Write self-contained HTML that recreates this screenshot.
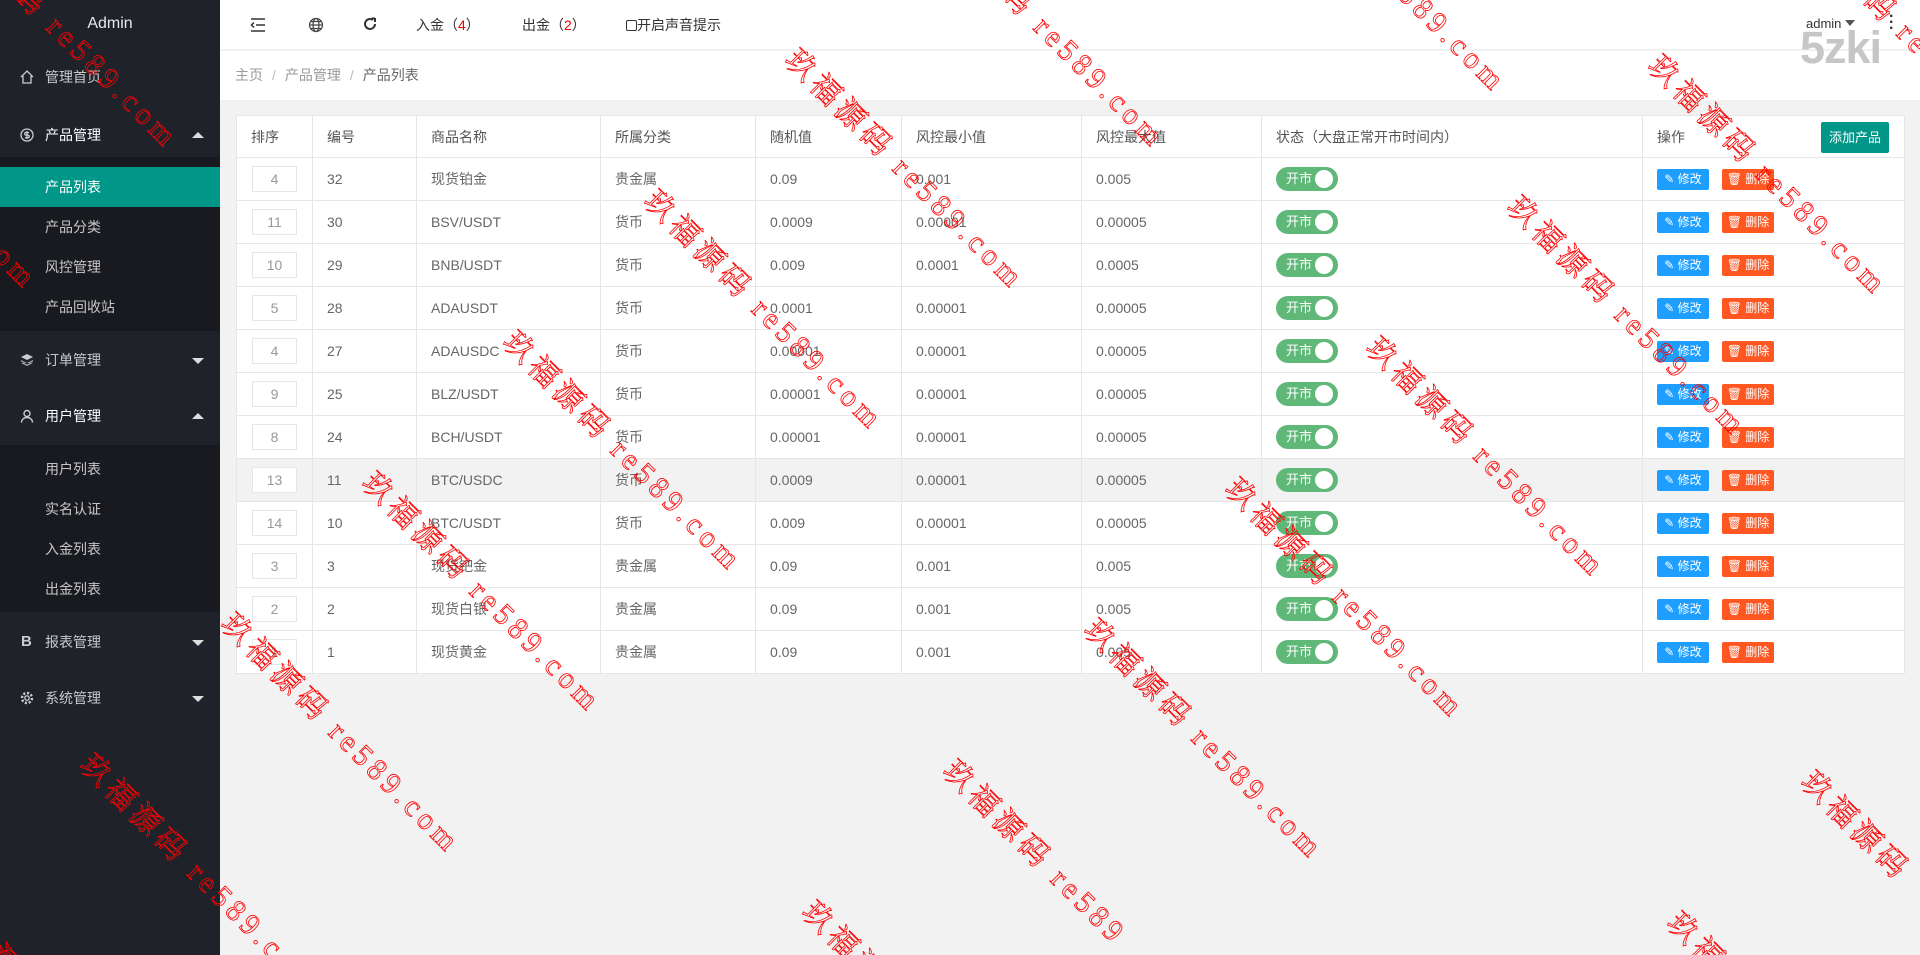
<!DOCTYPE html>
<html style="overflow:hidden;width:1920px;height:955px"><head><meta charset="utf-8"><style>
*{margin:0;padding:0;box-sizing:border-box}
body{width:1920px;height:955px;overflow:hidden;background:#f2f2f2;font-family:"Liberation Sans","Noto Sans CJK SC",sans-serif;font-size:14px;color:#666;position:relative}
#wrap{position:absolute;left:0;top:0;width:1920px;height:955px;overflow:hidden;contain:paint;clip-path:inset(0)}
.side{position:absolute;left:0;top:0;width:220px;height:955px;background:#20222a;color:rgba(255,255,255,.75)}
.logo{height:50px;line-height:48px;text-align:center;color:#e8e8e8;font-size:16px}
.it{position:absolute;left:0;width:220px;height:40px;line-height:40px;padding-left:45px}
.it svg{position:absolute;left:20px;top:13px}
.arr{position:absolute;right:16px;top:17px;width:0;height:0;border-left:6px solid transparent;border-right:6px solid transparent}
.up{border-bottom:6px solid #ddd}.dn{border-top:6px solid #ddd;top:18px}
.sub{position:absolute;left:0;width:220px;background:#191a1f}
.si{position:absolute;left:0;width:220px;height:40px;line-height:40px;padding-left:45px}
.act{background:#009688;color:#fff}
.top{position:absolute;left:220px;top:0;right:0;height:50px;background:#fff;border-bottom:1px solid #f0f0f0}
.bc{position:absolute;left:220px;top:51px;right:0;height:49px;background:#fff;line-height:49px;padding-left:15px;color:#999}
.bc b{font-weight:normal;margin:0 9px;color:#bbb}
table{position:absolute;left:236px;top:115px;width:1668px;border-collapse:collapse;table-layout:fixed;background:#fff}
td,th{border:1px solid #e6e6e6;height:43px;padding:0 14px;text-align:left;font-weight:normal;color:#666;white-space:nowrap}
th{height:42px;font-weight:normal;color:#555}
tr.h td{background:#f2f2f2}
.inp{display:inline-block;width:45px;height:26px;border:1px solid #e6e6e6;color:#999;text-align:center;line-height:24px;margin-left:1px}
.sw{display:inline-block;position:relative;width:62px;height:24px;border-radius:12px;background:#5fb878;color:#fff;font-size:13px;line-height:24px;padding-left:10px}
.sw:after{content:"";position:absolute;right:5px;top:3px;width:18px;height:18px;border-radius:50%;background:#fff}
.bt{display:inline-block;height:21px;line-height:21px;width:52px;border-radius:2px;color:#fff;font-size:12px;text-align:center;vertical-align:middle}
.b1{background:#1e9fff}.b2{background:#ff5722;margin-left:13px}
.add{position:absolute;right:15px;top:6px;width:68px;height:31px;line-height:31px;background:#009688;color:#fff;text-align:center;font-size:13px;border-radius:2px}
.wm{position:absolute;transform:rotate(45deg);transform-origin:0 0;font-family:"Liberation Serif","Noto Serif CJK SC",serif;font-size:30px;letter-spacing:5px;color:transparent;-webkit-text-stroke:0.8px #f00;white-space:nowrap;pointer-events:none}
</style></head><body><div id="wrap">
<div class="side">
<div class="logo">Admin</div>
<div class="it" style="top:57px"><svg width="14" height="14" viewBox="0 0 14 14" fill="none" stroke="#ccc" stroke-width="1.3"><path d="M1 7L7 1l6 6M3 6v7h8V6"/></svg>管理首页</div>
<div class="it" style="top:115px;color:#fff"><svg width="14" height="14" viewBox="0 0 14 14" fill="none" stroke="#ccc" stroke-width="1.3"><circle cx="7" cy="7" r="6"/><path d="M9 4.5H6a1.3 1.3 0 000 2.6h2a1.3 1.3 0 010 2.6H5M7 3v8"/></svg>产品管理<i class="arr up"></i></div>
<div class="sub" style="top:157px;height:174px">
<div class="si act" style="top:10px">产品列表</div>
<div class="si" style="top:50px">产品分类</div>
<div class="si" style="top:90px">风控管理</div>
<div class="si" style="top:130px">产品回收站</div>
</div>
<div class="it" style="top:340px"><svg width="14" height="14" viewBox="0 0 14 14" fill="#ccc"><path d="M7 1l6 3-6 3-6-3z"/><path d="M1 7l6 3 6-3v1.5l-6 3-6-3zM1 10l6 3 6-3" opacity=".8"/></svg>订单管理<i class="arr dn"></i></div>
<div class="it" style="top:396px;color:#fff"><svg width="14" height="14" viewBox="0 0 14 14" fill="none" stroke="#ccc" stroke-width="1.4"><circle cx="7" cy="4.5" r="3"/><path d="M1.5 13.5c0-3 2.5-5 5.5-5s5.5 2 5.5 5"/></svg>用户管理<i class="arr up"></i></div>
<div class="sub" style="top:445px;height:167px">
<div class="si" style="top:4px">用户列表</div>
<div class="si" style="top:44px">实名认证</div>
<div class="si" style="top:84px">入金列表</div>
<div class="si" style="top:124px">出金列表</div>
</div>
<div class="it" style="top:622px"><span style="position:absolute;left:21px;font-weight:bold;color:#ccc;font-size:15px">B</span>报表管理<i class="arr dn"></i></div>
<div class="it" style="top:678px"><svg width="14" height="14" viewBox="0 0 14 14" fill="none" stroke="#ccc" stroke-width="1.3"><circle cx="7" cy="7" r="2.2"/><circle cx="7" cy="7" r="5" stroke-dasharray="2.2 1.7" stroke-width="2.4"/></svg>系统管理<i class="arr dn"></i></div>
</div>
<div class="top">
<svg style="position:absolute;left:30px;top:18px" width="16" height="14" viewBox="0 0 16 14" stroke="#333" stroke-width="1.5"><path d="M1 1h14M6 7h9M1 13h14M4 4.5L1.5 7 4 9.5" fill="none"/></svg>
<svg style="position:absolute;left:88px;top:17px" width="16" height="16" viewBox="0 0 16 16" fill="none" stroke="#444" stroke-width="1.2"><circle cx="8" cy="8" r="6.5"/><ellipse cx="8" cy="8" rx="3" ry="6.5"/><path d="M1.5 8h13M2.5 4.5h11M2.5 11.5h11"/></svg>
<svg style="position:absolute;left:142px;top:16px" width="16" height="16" viewBox="0 0 16 16" fill="none" stroke="#333" stroke-width="2"><path d="M13 8a5 5 0 11-2-4"/><path d="M9.5 2.5h3.5v-.5V6" /></svg>
<span style="position:absolute;left:196px;top:15px;color:#333">入金（<span style="color:#e00">4</span>）</span>
<span style="position:absolute;left:302px;top:15px;color:#333">出金（<span style="color:#e00">2</span>）</span>
<span style="position:absolute;left:406px;top:15px;color:#333"><span style="display:inline-block;width:11px;height:11px;border:1px solid #333;border-radius:2px;vertical-align:-1px"></span>开启声音提示</span>
<span style="position:absolute;left:1586px;top:16px;color:#333;font-size:13px">admin <span style="display:inline-block;border-left:5px solid transparent;border-right:5px solid transparent;border-top:6px solid #555;vertical-align:2px"></span></span>
<span style="position:absolute;left:1669px;top:14px;color:#333;font-size:16px;line-height:6px;font-weight:bold">·<br>·<br>·</span>
</div>
<div class="bc">主页<b>/</b>产品管理<b>/</b><span style="color:#666">产品列表</span></div>
<span style="position:absolute;left:1800px;top:22px;color:#c6c6c6;font-size:45px;font-weight:bold;letter-spacing:-1px;z-index:5">5zki</span>
<table>
<colgroup><col style="width:76px"><col style="width:104px"><col style="width:184px"><col style="width:155px"><col style="width:146px"><col style="width:180px"><col style="width:180px"><col style="width:381px"><col style="width:262px"></colgroup>
<tr><th>排序</th><th>编号</th><th>商品名称</th><th>所属分类</th><th>随机值</th><th>风控最小值</th><th>风控最大值</th><th>状态（大盘正常开市时间内）</th><th style="position:relative">操作<span class="add">添加产品</span></th></tr>
<tr><td><span class="inp">4</span></td><td>32</td><td>现货铂金</td><td>贵金属</td><td>0.09</td><td>0.001</td><td>0.005</td><td><span class="sw">开市</span></td><td><span class="bt b1">✎ 修改</span><span class="bt b2">🗑 删除</span></td></tr>
<tr><td><span class="inp">11</span></td><td>30</td><td>BSV/USDT</td><td>货币</td><td>0.0009</td><td>0.00001</td><td>0.00005</td><td><span class="sw">开市</span></td><td><span class="bt b1">✎ 修改</span><span class="bt b2">🗑 删除</span></td></tr>
<tr><td><span class="inp">10</span></td><td>29</td><td>BNB/USDT</td><td>货币</td><td>0.009</td><td>0.0001</td><td>0.0005</td><td><span class="sw">开市</span></td><td><span class="bt b1">✎ 修改</span><span class="bt b2">🗑 删除</span></td></tr>
<tr><td><span class="inp">5</span></td><td>28</td><td>ADAUSDT</td><td>货币</td><td>0.0001</td><td>0.00001</td><td>0.00005</td><td><span class="sw">开市</span></td><td><span class="bt b1">✎ 修改</span><span class="bt b2">🗑 删除</span></td></tr>
<tr><td><span class="inp">4</span></td><td>27</td><td>ADAUSDC</td><td>货币</td><td>0.00001</td><td>0.00001</td><td>0.00005</td><td><span class="sw">开市</span></td><td><span class="bt b1">✎ 修改</span><span class="bt b2">🗑 删除</span></td></tr>
<tr><td><span class="inp">9</span></td><td>25</td><td>BLZ/USDT</td><td>货币</td><td>0.00001</td><td>0.00001</td><td>0.00005</td><td><span class="sw">开市</span></td><td><span class="bt b1">✎ 修改</span><span class="bt b2">🗑 删除</span></td></tr>
<tr><td><span class="inp">8</span></td><td>24</td><td>BCH/USDT</td><td>货币</td><td>0.00001</td><td>0.00001</td><td>0.00005</td><td><span class="sw">开市</span></td><td><span class="bt b1">✎ 修改</span><span class="bt b2">🗑 删除</span></td></tr>
<tr class="h"><td><span class="inp" style="background:#fff">13</span></td><td>11</td><td>BTC/USDC</td><td>货币</td><td>0.0009</td><td>0.00001</td><td>0.00005</td><td><span class="sw">开市</span></td><td><span class="bt b1">✎ 修改</span><span class="bt b2">🗑 删除</span></td></tr>
<tr><td><span class="inp">14</span></td><td>10</td><td>BTC/USDT</td><td>货币</td><td>0.009</td><td>0.00001</td><td>0.00005</td><td><span class="sw">开市</span></td><td><span class="bt b1">✎ 修改</span><span class="bt b2">🗑 删除</span></td></tr>
<tr><td><span class="inp">3</span></td><td>3</td><td>现货钯金</td><td>贵金属</td><td>0.09</td><td>0.001</td><td>0.005</td><td><span class="sw">开市</span></td><td><span class="bt b1">✎ 修改</span><span class="bt b2">🗑 删除</span></td></tr>
<tr><td><span class="inp">2</span></td><td>2</td><td>现货白银</td><td>贵金属</td><td>0.09</td><td>0.001</td><td>0.005</td><td><span class="sw">开市</span></td><td><span class="bt b1">✎ 修改</span><span class="bt b2">🗑 删除</span></td></tr>
<tr><td><span class="inp">1</span></td><td>1</td><td>现货黄金</td><td>贵金属</td><td>0.09</td><td>0.001</td><td>0.005</td><td><span class="sw">开市</span></td><td><span class="bt b1">✎ 修改</span><span class="bt b2">🗑 删除</span></td></tr>
</table>
<div class="wm" style="left:949px;top:-104px">玖福源码 re589.com</div>
<div class="wm" style="left:808px;top:37px">玖福源码 re589.com</div>
<div class="wm" style="left:667px;top:178px">玖福源码 re589.com</div>
<div class="wm" style="left:526px;top:319px">玖福源码 re589.com</div>
<div class="wm" style="left:385px;top:460px">玖福源码 re589.com</div>
<div class="wm" style="left:244px;top:601px">玖福源码 re589.com</div>
<div class="wm" style="left:103px;top:742px">玖福源码 re589.com</div>
<div class="wm" style="left:-38px;top:883px">玖福源码 re589</div>
<div class="wm" style="left:-179px;top:-245px">玖福源码 re589.com</div>
<div class="wm" style="left:-38px;top:-104px">玖福源码 re589.com</div>
<div class="wm" style="left:-179px;top:37px">玖福源码 re589.com</div>
<div class="wm" style="left:1812px;top:-98px">玖福源码 re589.com</div>
<div class="wm" style="left:1671px;top:43px">玖福源码 re589.com</div>
<div class="wm" style="left:1530px;top:184px">玖福源码 re589.com</div>
<div class="wm" style="left:1389px;top:325px">玖福源码 re589.com</div>
<div class="wm" style="left:1248px;top:466px">玖福源码 re589.com</div>
<div class="wm" style="left:1107px;top:607px">玖福源码 re589.com</div>
<div class="wm" style="left:966px;top:748px">玖福源码 re589</div>
<div class="wm" style="left:825px;top:889px">玖福源</div>
<div class="wm" style="left:1824px;top:759px">玖福源码</div>
<div class="wm" style="left:1690px;top:900px">玖福</div>
<div class="wm" style="left:1290px;top:-160px">玖福源码 re589.com</div>
</div></body></html>
